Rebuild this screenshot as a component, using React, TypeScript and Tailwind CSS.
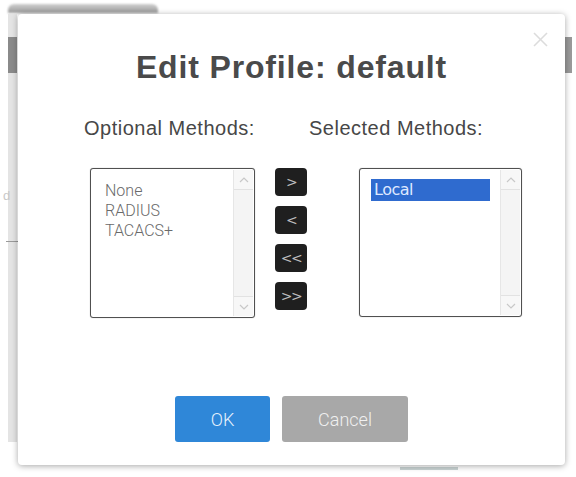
import React from "react";

function Chevron({ dir }: { dir: "up" | "down" }) {
  return (
    <svg width="10" height="6" viewBox="0 0 10 6" fill="none">
      {dir === "up" ? (
        <polyline points="1,5 5,1 9,5" stroke="#c8c8c8" strokeWidth="1.2" />
      ) : (
        <polyline points="1,1 5,5 9,1" stroke="#c8c8c8" strokeWidth="1.2" />
      )}
    </svg>
  );
}

function ScrollBar() {
  return (
    <div className="w-[20px] my-[1px] mr-[1px] flex flex-col bg-[#f4f4f4] border-l border-[#e6e6e6]">
      <div className="h-[20px] flex items-center justify-center border-b border-[#e2e2e2] bg-[#f7f7f7]">
        <Chevron dir="up" />
      </div>
      <div className="flex-1" />
      <div className="h-[20px] flex items-center justify-center border-t border-[#e2e2e2] bg-[#f7f7f7]">
        <Chevron dir="down" />
      </div>
    </div>
  );
}

function MoveButton({ label }: { label: string }) {
  return (
    <div className="w-[32px] h-[28px] rounded-[4px] bg-[#1f1f1f] flex items-center justify-center text-[#bdbdbd] text-[14px] tracking-[-1.5px] [font-family:'DejaVu_Sans',sans-serif]">
      {label}
    </div>
  );
}

export default function App() {
  return (
    <div className="relative w-[576px] h-[477px] overflow-hidden bg-white [font-family:'Liberation_Sans',Arial,sans-serif]">
      {/* page behind the modal */}
      <div className="absolute left-[8px] top-[4px] w-[150px] h-[9px] rounded-t-[6px] bg-gradient-to-b from-[#cfcfcf] to-[#9a9a9a] blur-[1px]" />
      <div className="absolute left-[8px] top-[14px] w-[9px] h-[428px] bg-[#e4e4e4]" />
      <div className="absolute left-[8px] top-[37px] w-[9px] h-[36px] bg-[#8a8a8a] blur-[0.5px]" />
      <div className="absolute left-[565px] top-[37px] w-[7px] h-[36px] bg-[#9a9a9a] blur-[0.5px]" />
      <div className="absolute left-[3px] top-[186px] text-[13px] text-[#c8c8c8]">d</div>
      <div className="absolute left-[6px] top-[241px] w-[12px] h-[1px] bg-[#9a9a9a]" />
      <div className="absolute left-[400px] top-[467px] w-[58px] h-[3px] bg-[#c9d3d3]" />

      {/* modal */}
      <div className="absolute left-[18px] top-[14px] w-[547px] h-[451px] rounded-[4px] bg-white shadow-[0_1px_6px_rgba(0,0,0,0.35)] flex flex-col">
        <svg className="absolute left-[515px] top-[18px]" width="15" height="15" viewBox="0 0 15 15">
          <line x1="1" y1="1" x2="14" y2="14" stroke="#dcdcdc" strokeWidth="1.6" />
          <line x1="14" y1="1" x2="1" y2="14" stroke="#dcdcdc" strokeWidth="1.6" />
        </svg>

        <div className="mt-[37px] text-center text-[32px] leading-none font-bold text-[#4a4a4a] tracking-[0.85px]">
          Edit Profile: default
        </div>

        <div className="mt-[35px] flex pl-[66px] text-[20px] leading-none text-[#474747] tracking-[0.5px]">
          <div className="w-[225px]">Optional Methods:</div>
          <div>Selected Methods:</div>
        </div>

        <div className="mt-[30px] flex items-start pl-[72px]">
          <div className="w-[165px] h-[150px] rounded-[3px] border-[1.5px] border-[#505050] bg-white flex shadow-[0_0_1px_rgba(0,0,0,0.4)]">
            <div className="flex-1 pl-[14px] pt-[12px] text-[16px] leading-[20px] text-[#6a6a6a] font-light [font-family:Roboto,'Liberation_Sans',sans-serif]">
              <div>None</div>
              <div>RADIUS</div>
              <div>TACACS+</div>
            </div>
            <ScrollBar />
          </div>

          <div className="ml-[20px] flex flex-col gap-[10px]">
            <MoveButton label=">" />
            <MoveButton label="<" />
            <MoveButton label="<<" />
            <MoveButton label=">>" />
          </div>

          <div className="ml-[52px] w-[163px] h-[149px] rounded-[3px] border-[1.5px] border-[#505050] bg-white flex shadow-[0_0_1px_rgba(0,0,0,0.4)]">
            <div className="flex-1 pl-[11px] pt-[10px]">
              <div className="w-[119px] h-[22px] bg-[#2f6bcf] pl-[3px] text-[16px] leading-[22px] text-[#dfe8ff] [font-family:'DejaVu_Sans',sans-serif] tracking-[-0.5px]">
                Local
              </div>
            </div>
            <ScrollBar />
          </div>
        </div>

        <div className="mt-[78px] flex justify-center gap-[12px] [font-family:Roboto,'Liberation_Sans',sans-serif] font-light">
          <div className="w-[95px] h-[46px] rounded-[3px] bg-[#2f87d8] flex items-center justify-center text-[18px] text-[#e8f2fc]">
            OK
          </div>
          <div className="w-[126px] h-[46px] rounded-[3px] bg-[#a8a8a8] flex items-center justify-center text-[18px] text-[#f0f0f0]">
            Cancel
          </div>
        </div>
      </div>
    </div>
  );
}
